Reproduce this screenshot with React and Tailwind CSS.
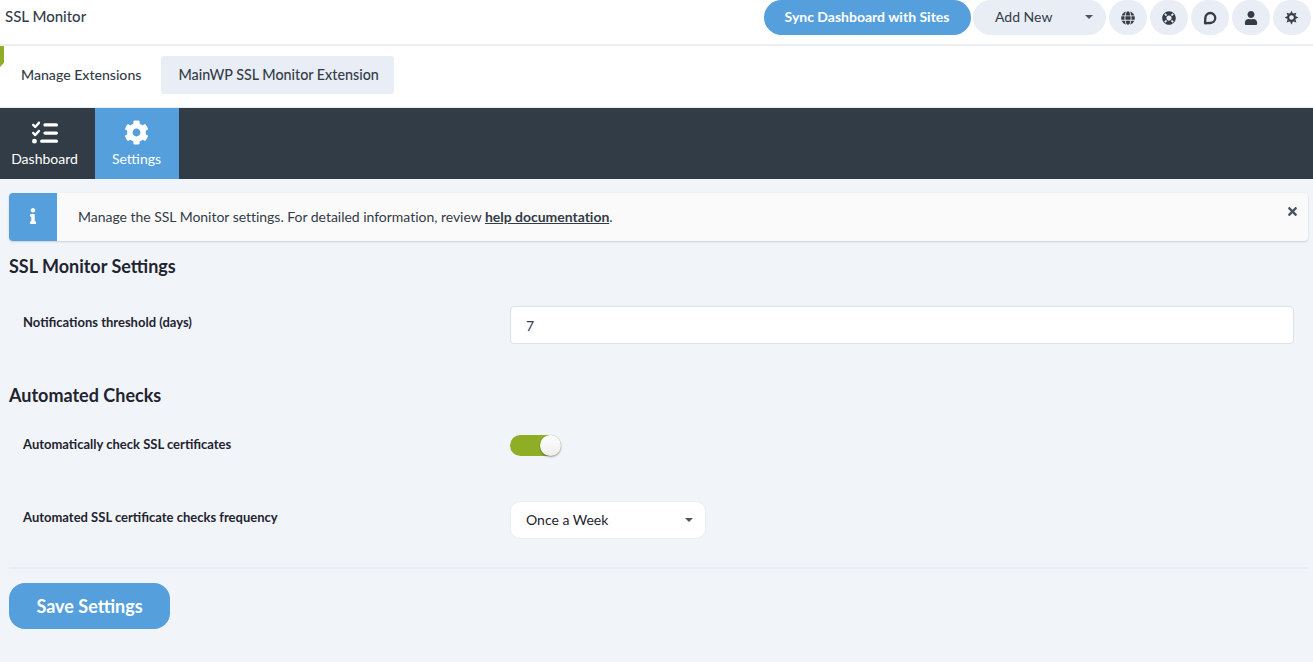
import React from 'react';
import { FaCog, FaGlobe, FaInfo, FaLifeRing, FaTimes, FaUser } from 'react-icons/fa';
import { FaListCheck } from 'react-icons/fa6';

function RoundButton({ children }) {
  return (
    <button className="flex h-[35px] w-[38.5px] items-center justify-center rounded-full bg-[#e9edf5] text-[#333c47]">
      {children}
    </button>
  );
}

function ChatIcon() {
  return (
    <svg width="14" height="14" viewBox="0 0 24 24" fill="none" stroke="currentColor" strokeWidth="4" strokeLinejoin="round">
      <path d="M3.5 21 L4 12 a8.5 8.5 0 1 1 8.5 8.5 Z" />
    </svg>
  );
}

function GearIcon() {
  return (
    <svg width="15" height="15" viewBox="0 0 24 24" fill="currentColor">
      <path d="M12 1l2 4h-4zM12 23l-2-4h4zM1 12l4-2v4zM23 12l-4 2v-4zM4.2 4.2l4.3 1.4-2.9 2.9zM19.8 19.8l-4.3-1.4 2.9-2.9zM19.8 4.2l-1.4 4.3-2.9-2.9zM4.2 19.8l1.4-4.3 2.9 2.9z" />
      <circle cx="12" cy="12" r="5.5" fill="none" stroke="currentColor" strokeWidth="3.5" />
    </svg>
  );
}

function App() {
  return (
    <div className="flex min-h-[662px] flex-col bg-[#f1f4f9] font-['Lato',sans-serif] text-[14px] text-[#333c47]">
      <header className="flex h-[46px] items-start justify-between border-b-2 border-[#eceef5] bg-white">
        <div className="pl-[5px] pt-[6px] text-[15px] leading-[20px] font-medium">SSL Monitor</div>
        <div className="flex items-center gap-[2.5px] pr-[2px]">
          <button className="h-[35px] w-[207px] rounded-full bg-[#559fdd] pb-[2px] text-[14px] font-bold text-white">
            Sync Dashboard with Sites
          </button>
          <button className="flex h-[35px] w-[133px] items-center justify-between rounded-full bg-[#e9edf5] pb-[2px] pl-[22px] pr-[13px] text-[14px]">
            Add New
            <span className="h-0 w-0 border-x-[4px] border-t-[4px] border-x-transparent border-t-[#4b5563]" />
          </button>
          <RoundButton><FaGlobe size={14} /></RoundButton>
          <RoundButton><FaLifeRing size={14} /></RoundButton>
          <RoundButton><ChatIcon /></RoundButton>
          <RoundButton><FaUser size={14} /></RoundButton>
          <RoundButton><GearIcon /></RoundButton>
        </div>
      </header>

      <div className="relative flex h-[62px] items-center gap-[5px] border-b border-[#eceef5] bg-white pb-[4px] pl-[6px]">
        <span className="absolute left-0 top-0 h-[21px] w-[4px] bg-[#8fae26] [clip-path:polygon(0_0,100%_0,100%_80%,0_100%)]" />
        <div className="px-[15px] py-[10px] text-[14.1px] font-medium">Manage Extensions</div>
        <div className="flex h-[38px] items-center rounded-[3px] bg-[#e9edf5] pl-[17px] pr-[15px] text-[14.3px] font-medium">
          MainWP SSL Monitor Extension
        </div>
      </div>

      <nav className="flex h-[71px] bg-[#323c47] text-white">
        <div className="flex w-[95px] flex-col items-center pr-[6px] pt-[12px]">
          <FaListCheck size={26} />
          <span className="mt-[3px] text-[14px] leading-[20px]">Dashboard</span>
        </div>
        <div className="flex w-[84px] flex-col items-center bg-[#559fdd] pr-[1px] pt-[12px]">
          <FaCog size={25} />
          <span className="mt-[4px] text-[14px] leading-[20px]">Settings</span>
        </div>
      </nav>

      <main className="flex flex-col pl-[9px] pr-[5px]">
        <div className="mt-[14px] flex h-[48px] items-stretch rounded-[4px] bg-[#fafafa] shadow-[0_1px_2px_rgba(0,0,0,0.15)]">
          <div className="flex w-[48px] items-center justify-center rounded-l-[4px] bg-[#559fdd] pb-[2px] text-white">
            <FaInfo size={16} />
          </div>
          <p className="flex flex-1 items-center pb-[2px] pl-[21px] text-[14px] tracking-[-0.025px]">
            <span>
              Manage the SSL Monitor settings. For detailed information, review{' '}
              <a className="font-bold underline">help documentation</a>.
            </span>
          </p>
          <div className="pr-[9px] pt-[12px] text-[#4b5563]">
            <FaTimes size={13} />
          </div>
        </div>

        <h2 className="mt-[14px] text-[18px] leading-[22px] font-bold text-[#1f2430]">SSL Monitor Settings</h2>

        <div className="mt-[29px] flex items-start pl-[14px] pr-[14px]">
          <label className="w-[487px] pt-[8px] text-[13px] leading-[16px] font-bold text-[#1f2430]">
            Notifications threshold (days)
          </label>
          <input
            readOnly
            value="7"
            className="h-[38px] flex-1 rounded-[4px] border border-[#dde1ea] bg-white px-[15px] text-[14px] text-[#333c47]"
          />
        </div>

        <h2 className="mt-[40px] text-[18px] leading-[22px] font-bold text-[#1f2430]">Automated Checks</h2>

        <div className="mt-[29px] flex items-start pl-[14px]">
          <label className="w-[487px] pt-[1px] text-[13px] leading-[16px] font-bold text-[#1f2430]">
            Automatically check SSL certificates
          </label>
          <span className="relative h-[21px] w-[51px] rounded-full bg-[#8fae26]">
            <span className="absolute right-0 top-0 h-[21px] w-[21px] rounded-full bg-gradient-to-b from-white to-[#eeeeee] shadow-[0_1px_2px_rgba(0,0,0,0.4)]" />
          </span>
        </div>

        <div className="mt-[45px] flex items-start pl-[14px]">
          <label className="w-[487px] pt-[8px] text-[13px] leading-[16px] font-bold text-[#1f2430]">
            Automated SSL certificate checks frequency
          </label>
          <div className="flex h-[38px] w-[196px] items-center justify-between rounded-[10px] border border-[#e9edf5] bg-white pb-[1px] pl-[15px] pr-[12px] text-[14px] text-[#1f2430]">
            Once a Week
            <span className="h-0 w-0 border-x-[4px] border-t-[4px] border-x-transparent border-t-[#4b5563]" />
          </div>
        </div>

        <hr className="mt-[28px] border-t-2 border-[#e9edf5]" />

        <button className="mt-[14px] h-[46px] w-[161px] rounded-[16px] bg-[#559fdd] text-[18px] font-bold text-white">
          Save Settings
        </button>
      </main>
    </div>
  );
}

export default App;
